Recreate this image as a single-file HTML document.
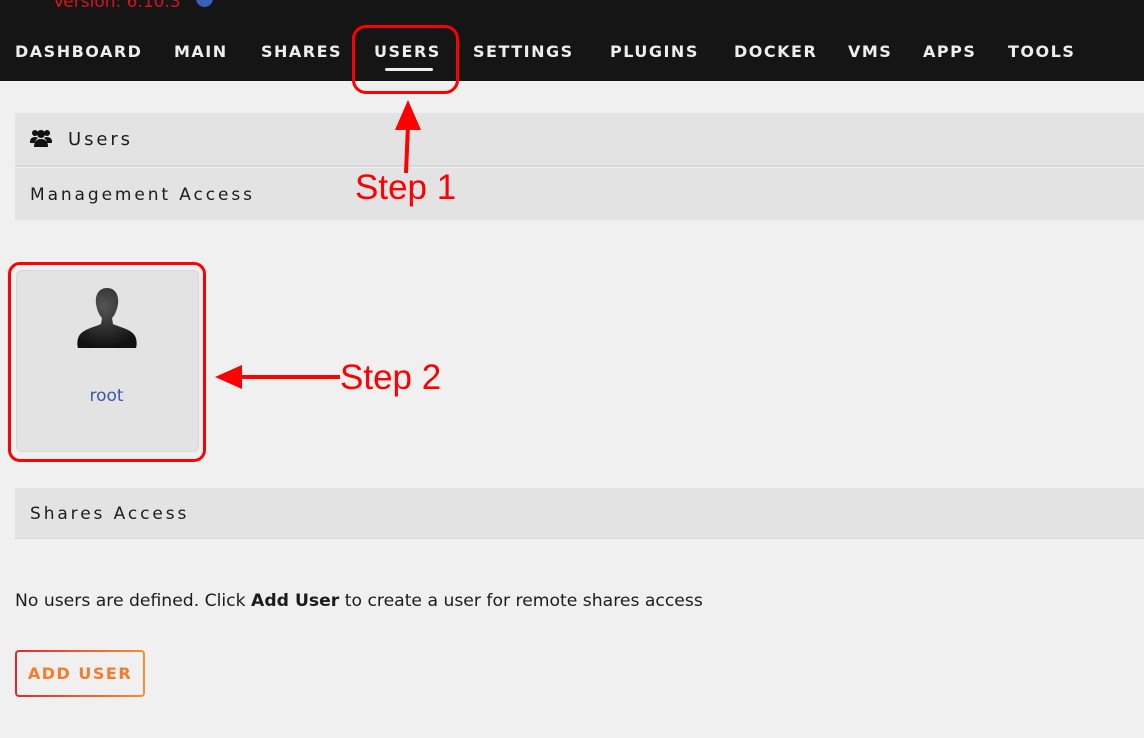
<!DOCTYPE html>
<html><head><style>
body{margin:0;width:1144px;height:738px;background:#f0f0f0;font-family:"DejaVu Sans","Liberation Sans",sans-serif;position:relative;overflow:hidden}
.a{position:absolute}
.nav{left:0;top:0;width:1144px;height:81px;background:#151515}
.nav span{position:absolute;top:42px;color:#eee;font-weight:bold;font-size:16px;letter-spacing:1.5px}
.band{left:15px;width:1129px;background:#e3e3e3;color:#1c1c1c;letter-spacing:2.9px}
</style></head><body>
<div class="a nav">
<div class="a" style="left:53px;top:-8px;color:#d4161c;font-size:17px">Version: 6.10.3</div>
<div class="a" style="left:196px;top:-6px;width:17px;height:13px;border-radius:0 0 9px 9px;background:#3a5fb8"></div>
<span style="left:15px">DASHBOARD</span>
<span style="left:174px">MAIN</span>
<span style="left:261px">SHARES</span>
<span style="left:374px">USERS</span>
<span style="left:473px">SETTINGS</span>
<span style="left:610px">PLUGINS</span>
<span style="left:734px">DOCKER</span>
<span style="left:848px">VMS</span>
<span style="left:923px">APPS</span>
<span style="left:1008px">TOOLS</span>
<div class="a" style="left:385px;top:68px;width:48px;height:3px;background:#eee;border-radius:2px"></div>
</div>
<div class="a" style="left:352px;top:25px;width:101px;height:63px;border:3.5px solid #f00;border-radius:14px"></div>
<div class="a band" style="top:113px;height:52px;font-size:18px;line-height:54px;border-bottom:2px solid #d8d8d8">
<svg style="position:absolute;left:15px;top:15px" width="22" height="20" viewBox="0 0 22 20"><g fill="#111"><circle cx="5" cy="5" r="3"/><circle cx="17" cy="5" r="3"/><circle cx="11" cy="6" r="4"/><path d="M0 14q0-5 5-5 2 0 3 1-3 2-3 5H0z"/><path d="M22 14q0-5-5-5-2 0-3 1 3 2 3 5h5z"/><path d="M4 19q0-8 7-8t7 8z"/></g></svg>
<span style="position:absolute;left:53px">Users</span></div>
<div class="a band" style="top:168px;height:52px;font-size:17px;line-height:54px"><span style="position:absolute;left:15px">Management Access</span></div>
<div class="a" style="left:16px;top:270px;width:181px;height:180px;background:#e3e3e3;border:1px solid #d6d6d6;border-radius:6px"></div>
<svg class="a" style="left:76px;top:286px" width="62" height="70" viewBox="0 0 62 70"><defs><radialGradient id="g" cx="0.45" cy="0.3" r="0.7"><stop offset="0" stop-color="#555"/><stop offset="1" stop-color="#111"/></radialGradient></defs><path fill="url(#g)" d="M31 2c-9 0-12 8-11 16 1 6 3 11 6 14l-1 6c-6 3-18 5-22 12-2 4-2 9-1 12h58c1-3 1-8-1-12-4-7-16-9-22-12l-1-6c3-3 5-8 6-14 1-8-2-16-11-16z"/></svg>
<div class="a" style="left:16px;top:386px;width:181px;text-align:center;color:#3a56b0;font-size:17px">root</div>
<div class="a" style="left:8px;top:262px;width:192px;height:194px;border:3.5px solid #f00;border-radius:12px"></div>
<svg class="a" style="left:210px;top:100px" width="260" height="300"><g fill="#f00" stroke="#f00"><path d="M198 0l-13 30h26z" stroke="none"/><line x1="198" y1="25" x2="196" y2="73" stroke-width="4"/><path d="M5 277l27-12v24z" stroke="none"/><line x1="28" y1="277" x2="130" y2="277" stroke-width="4"/></g></svg>
<div class="a" style="left:355px;top:168px;color:#f00;font-family:'Liberation Sans',sans-serif;font-size:35px">Step 1</div>
<div class="a" style="left:340px;top:358px;color:#f00;font-family:'Liberation Sans',sans-serif;font-size:35px">Step 2</div>
<div class="a band" style="top:488px;height:50px;font-size:17px;line-height:52px;border-bottom:1px solid #d6d6d6"><span style="position:absolute;left:15px">Shares Access</span></div>
<div class="a" style="left:15px;top:591px;font-size:17.2px;color:#1c1c1c">No users are defined. Click <b>Add User</b> to create a user for remote shares access</div>
<div class="a" style="left:15px;top:650px;width:130px;height:47px;border-radius:4px;background:linear-gradient(90deg,#e22828,#ff8c2f)"><div style="margin:2px;height:43px;background:#f0f0f0;border-radius:2px;color:#f57c2b;font-weight:bold;font-size:16px;letter-spacing:1.5px;line-height:43px;text-align:center">ADD USER</div></div>
</body></html>
